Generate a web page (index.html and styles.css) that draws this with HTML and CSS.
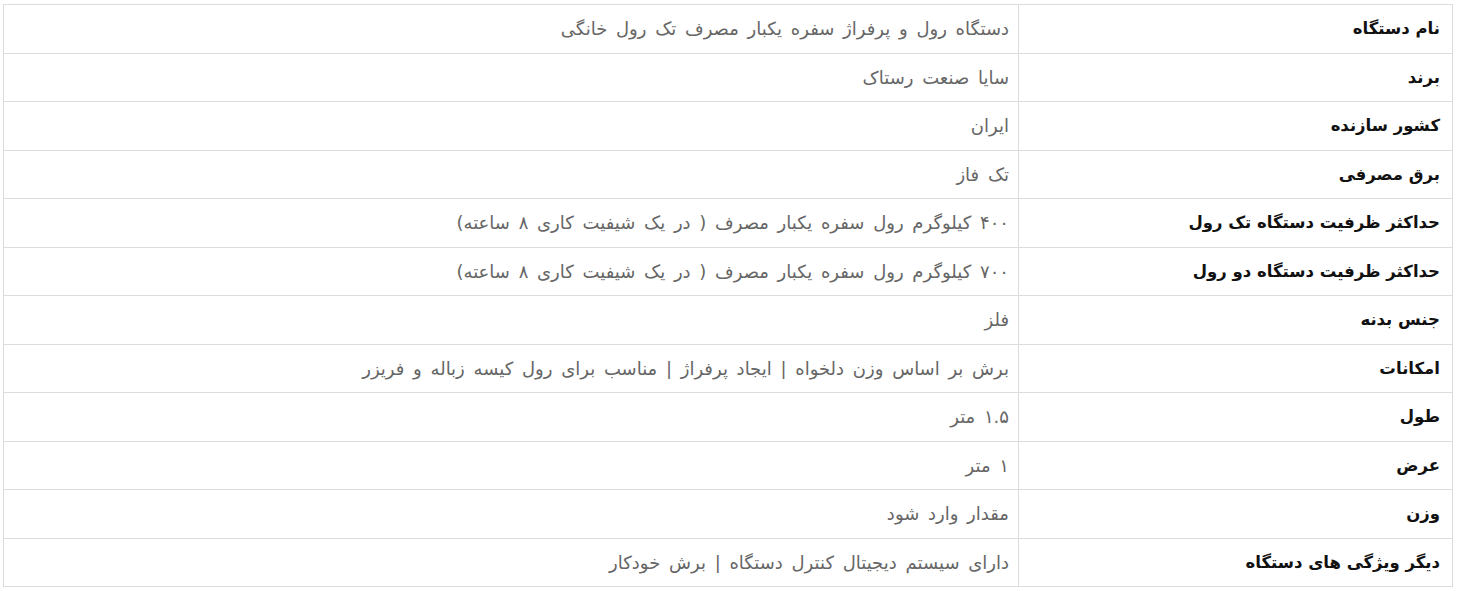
FILE: index.html
```html
<!DOCTYPE html>
<html lang="fa" dir="rtl">
<head>
<meta charset="utf-8">
<link rel="stylesheet" href="styles.css">
</head>
<body>
<div class="wrap">
<table class="specs">
<tbody>
<tr><th>نام دستگاه</th><td>دستگاه رول و پرفراژ سفره یکبار مصرف تک رول خانگی</td></tr>
<tr><th>برند</th><td>سایا صنعت رستاک</td></tr>
<tr><th>کشور سازنده</th><td>ایران</td></tr>
<tr><th>برق مصرفی</th><td>تک فاز</td></tr>
<tr><th>حداکثر ظرفیت دستگاه تک رول</th><td>۴۰۰ کیلوگرم رول سفره یکبار مصرف ( در یک شیفیت کاری ۸ ساعته)</td></tr>
<tr><th>حداکثر ظرفیت دستگاه دو رول</th><td>۷۰۰ کیلوگرم رول سفره یکبار مصرف ( در یک شیفیت کاری ۸ ساعته)</td></tr>
<tr><th>جنس بدنه</th><td>فلز</td></tr>
<tr><th>امکانات</th><td>برش بر اساس وزن دلخواه | ایجاد پرفراژ | مناسب برای رول کیسه زباله و فریزر</td></tr>
<tr><th>طول</th><td>۱.۵ متر</td></tr>
<tr><th>عرض</th><td>۱ متر</td></tr>
<tr><th>وزن</th><td>مقدار وارد شود</td></tr>
<tr><th>دیگر ویژگی های دستگاه</th><td>دارای سیستم دیجیتال کنترل دستگاه | برش خودکار</td></tr>
</tbody>
</table>
</div>
</body>
</html>
```
FILE: styles.css
```css
html, body {
  margin: 0;
  padding: 0;
  background: #fff;
}
body {
  font-family: "DejaVu Sans", "Noto Sans", sans-serif;
}
.wrap {
  padding: 4px 4px 0 3px;
}
.specs {
  width: 1450px;
  border-collapse: collapse;
  border: 1px solid #dcdcdc;
}
.specs tr {
  height: 48.5px;
}
.specs th,
.specs td {
  border: 1px solid #dcdcdc;
  vertical-align: middle;
  text-align: right;
  padding: 0 11px;
}
.specs th {
  width: 410px;
  font-size: 16.5px;
  font-weight: bold;
  color: #111;
  padding-right: 12px;
}
.specs td {
  font-size: 18px;
  font-weight: normal;
  word-spacing: 3px;
  color: #666;
  padding-right: 9px;
}
```
